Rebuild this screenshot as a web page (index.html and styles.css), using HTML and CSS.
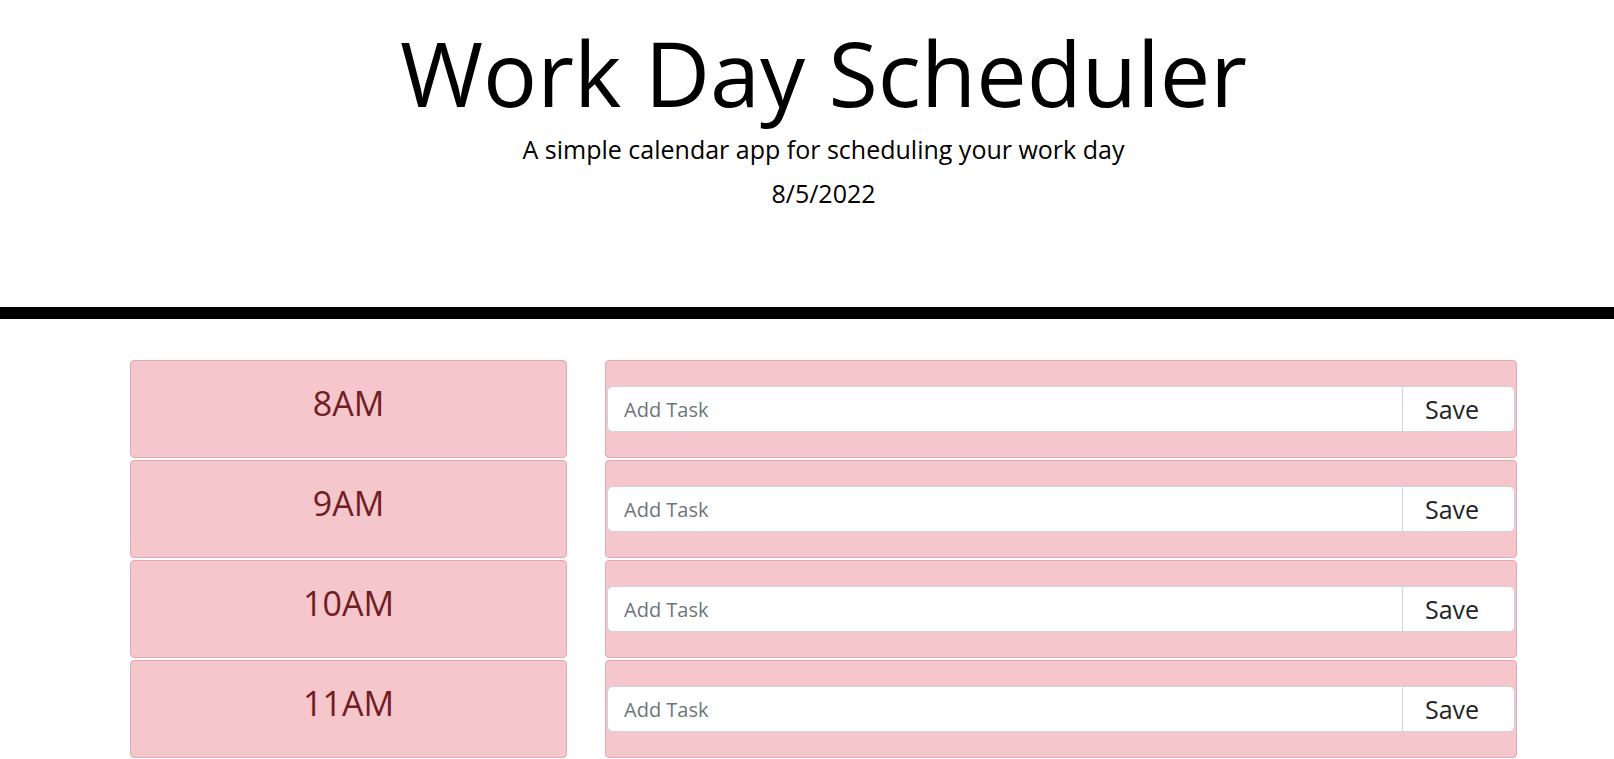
FILE: index.html
```html
<!DOCTYPE html>
<html lang="en">
<head>
<meta charset="utf-8">
<title>Work Day Scheduler</title>
<link rel="stylesheet" href="styles.css">
</head>
<body>
<div class="page">
  <header class="jumbotron">
    <h1 class="title">Work Day Scheduler</h1>
    <p class="lead">A simple calendar app for scheduling your work day</p>
    <p class="date">8/5/2022</p>
  </header>
  <main class="schedule">
    <div class="row">
      <div class="hour">8AM</div>
      <div class="task">
        <div class="input-group">
          <input class="task-input" type="text" placeholder="Add Task">
          <button class="save-btn" type="button">Save</button>
        </div>
      </div>
    </div>
    <div class="row">
      <div class="hour">9AM</div>
      <div class="task">
        <div class="input-group">
          <input class="task-input" type="text" placeholder="Add Task">
          <button class="save-btn" type="button">Save</button>
        </div>
      </div>
    </div>
    <div class="row">
      <div class="hour">10AM</div>
      <div class="task">
        <div class="input-group">
          <input class="task-input" type="text" placeholder="Add Task">
          <button class="save-btn" type="button">Save</button>
        </div>
      </div>
    </div>
    <div class="row">
      <div class="hour">11AM</div>
      <div class="task">
        <div class="input-group">
          <input class="task-input" type="text" placeholder="Add Task">
          <button class="save-btn" type="button">Save</button>
        </div>
      </div>
    </div>
  </main>
</div>
</body>
</html>
```

FILE: styles.css
```css
html, body {
  margin: 0;
  padding: 0;
  overflow: hidden;
  background: #fff;
}

body {
  font-family: "Open Sans", "Noto Sans", sans-serif;
  color: #000;
}

.page {
  width: 1647px;
}

.jumbotron {
  text-align: center;
  padding: 18px 0 95px;
  border-bottom: 12px solid #000;
}

.title {
  margin: 0;
  font-size: 90px;
  font-weight: 400;
  line-height: 1.2;
}

.lead {
  margin: 5px 0 0;
  font-size: 25px;
  line-height: 1.5;
  font-weight: 400;
}

.date {
  margin: 6px 0 0;
  font-size: 25px;
  line-height: 1.5;
}

.schedule {
  padding: 41px 130px 0;
  display: flex;
  flex-direction: column;
  gap: 2px;
}

.row {
  display: flex;
  gap: 38px;
}

.hour,
.task {
  box-sizing: border-box;
  height: 98px;
  background: #f5c6cb;
  border: 1px solid #dfaab1;
  border-radius: 4px;
  color: #721c24;
}

.hour {
  width: 437px;
  padding-top: 17px;
  text-align: center;
  font-size: 34px;
  line-height: 1.5;
}

.task {
  flex: 1;
  display: flex;
  align-items: center;
  padding: 0 1px;
}

.input-group {
  flex: 1;
  display: flex;
  height: 46px;
}

.task-input {
  flex: 1;
  min-width: 0;
  box-sizing: border-box;
  height: 46px;
  margin: 0;
  padding: 0 16px;
  border: 1px solid #ced4da;
  border-radius: 6px 0 0 6px;
  background: #fff;
  font-family: "Open Sans", "Noto Sans", sans-serif;
  font-size: 20px;
  color: #495057;
  outline: none;
}

.task-input::placeholder {
  color: #6c757d;
  opacity: 1;
}

.save-btn {
  box-sizing: border-box;
  width: 113px;
  height: 46px;
  margin: 0 0 0 -1px;
  padding: 0 0 0 22px;
  text-align: left;
  border: 1px solid #ced4da;
  border-radius: 0 6px 6px 0;
  background: #fff;
  font-family: "Open Sans", "Noto Sans", sans-serif;
  font-size: 25px;
  color: #212529;
  cursor: pointer;
}
```
